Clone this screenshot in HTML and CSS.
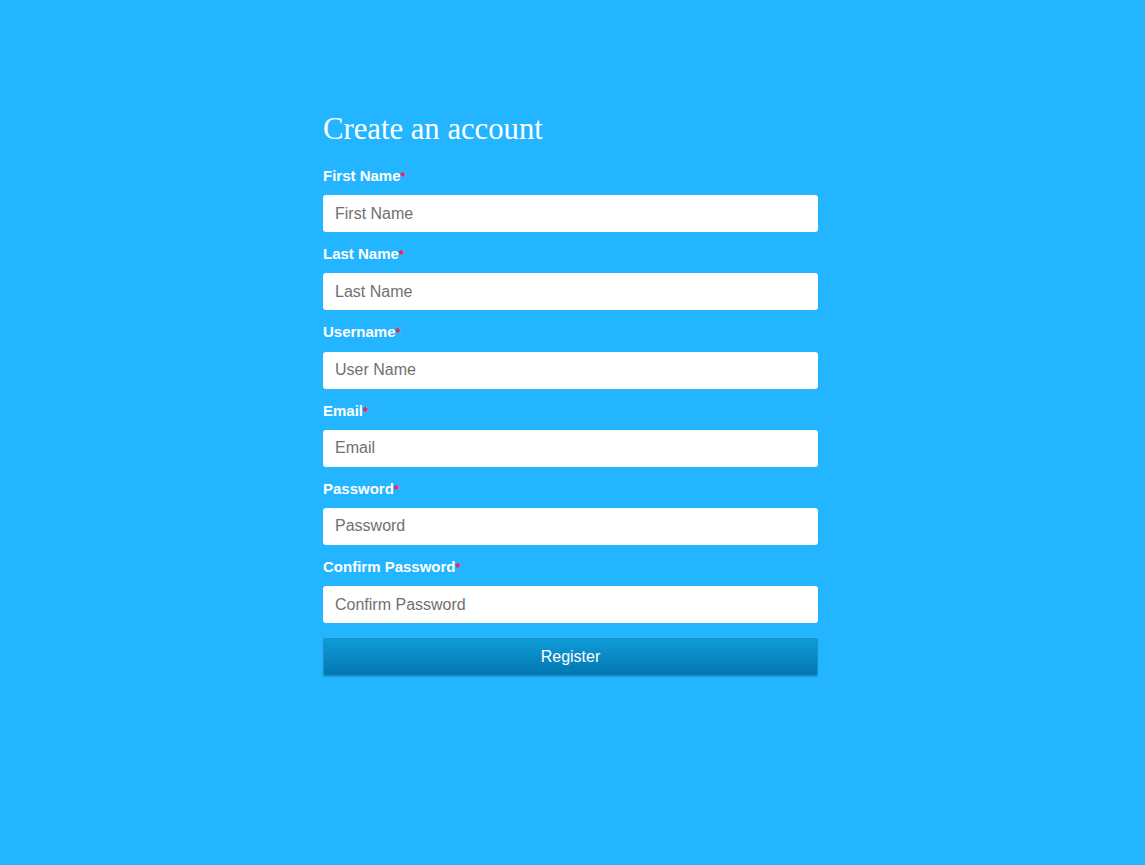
FILE: index.html
```html
<!DOCTYPE html>
<html>
<head>
<meta charset="utf-8">
<link rel="stylesheet" href="styles.css">
</head>
<body>
<div class="page">
  <form class="form">
    <h1 class="title">Create an account</h1>
    <label class="label">First Name<span class="req">*</span></label>
    <input class="field" type="text" placeholder="First Name">
    <label class="label">Last Name<span class="req">*</span></label>
    <input class="field" type="text" placeholder="Last Name">
    <label class="label">Username<span class="req">*</span></label>
    <input class="field" type="text" placeholder="User Name">
    <label class="label">Email<span class="req">*</span></label>
    <input class="field" type="text" placeholder="Email">
    <label class="label">Password<span class="req">*</span></label>
    <input class="field" type="password" placeholder="Password">
    <label class="label">Confirm Password<span class="req">*</span></label>
    <input class="field" type="password" placeholder="Confirm Password">
    <button class="btn" type="button">Register</button>
  </form>
</div>
</body>
</html>
```

FILE: styles.css
```css
html, body {
  margin: 0;
  padding: 0;
  background: #23b5ff;
  height: 100%;
}
.page {
  padding-top: 110px;
}
.form {
  width: 495px;
  margin-left: 323px;
  display: flex;
  flex-direction: column;
}
.title {
  font-family: "Liberation Serif", serif;
  font-weight: normal;
  font-size: 30.7px;
  line-height: 38px;
  color: #fff;
  margin: 0 0 17px 0;
}
.label {
  font-family: "Liberation Sans", Arial, sans-serif;
  font-weight: bold;
  font-size: 15px;
  line-height: 20px;
  height: 20.2px;
  padding-top: 1px;
  color: #fff;
  margin-bottom: 9px;
}
.req {
  color: #ff1744;
  font-weight: bold;
  font-size: 13px;
}
.field {
  box-sizing: border-box;
  height: 37px;
  width: 100%;
  border: none;
  border-radius: 3px;
  background: #fff;
  padding: 0 12px;
  font-family: "Liberation Sans", Arial, sans-serif;
  font-size: 16px;
  color: #333;
  margin: 0 0 11px 0;
  outline: none;
}
.field::placeholder {
  color: #707070;
}
.field:last-of-type {
  margin-bottom: 15px;
}
.btn {
  box-sizing: border-box;
  height: 38px;
  width: 100%;
  border: 1px solid #1a8fc8;
  border-radius: 2px;
  background: linear-gradient(to bottom, #0f9bd9, #0277b0);
  box-shadow: 0 1px 1px rgba(0,0,0,0.15);
  color: #fff;
  font-family: "Liberation Sans", Arial, sans-serif;
  font-size: 16px;
}
```
